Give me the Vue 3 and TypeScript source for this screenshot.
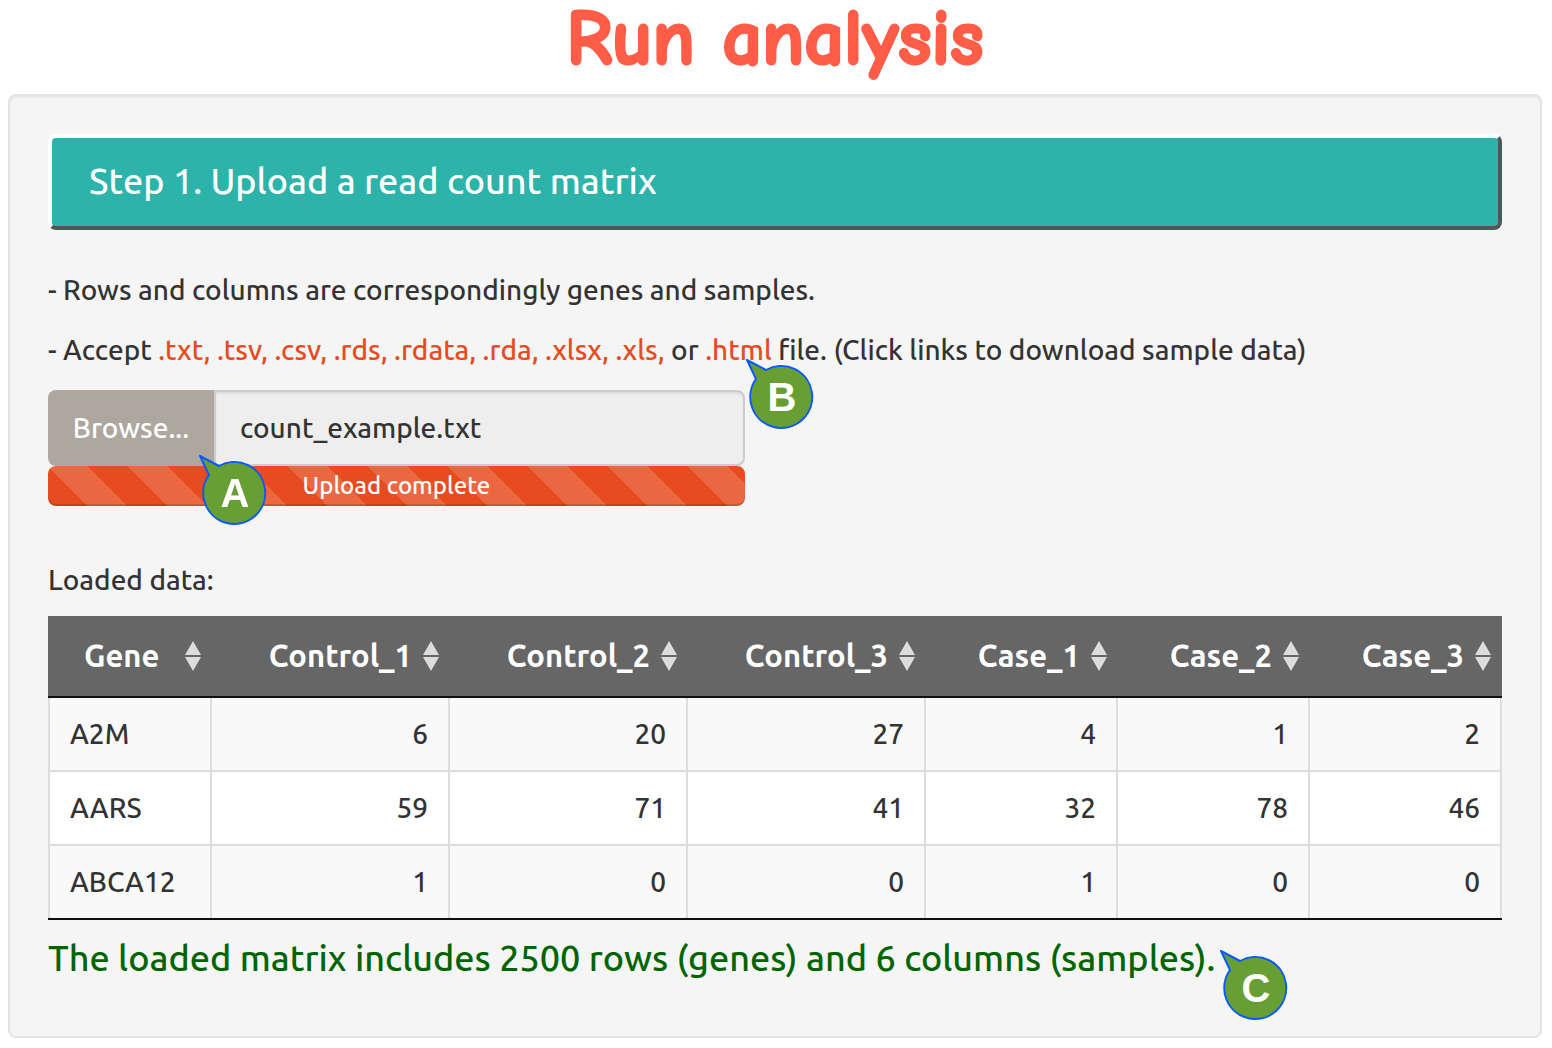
<script setup lang="ts">
import { ref } from 'vue'

interface Column {
  name: string
  width: number
}

interface GeneRow {
  gene: string
  counts: number[]
}

const formats: string[] = ['.txt,', '.tsv,', '.csv,', '.rds,', '.rdata,', '.rda,', '.xlsx,', '.xls,']

const columns: Column[] = [
  { name: 'Gene', width: 164 },
  { name: 'Control_1', width: 238 },
  { name: 'Control_2', width: 238 },
  { name: 'Control_3', width: 238 },
  { name: 'Case_1', width: 192 },
  { name: 'Case_2', width: 192 },
  { name: 'Case_3', width: 192 },
]

const rows: GeneRow[] = [
  { gene: 'A2M', counts: [6, 20, 27, 4, 1, 2] },
  { gene: 'AARS', counts: [59, 71, 41, 32, 78, 46] },
  { gene: 'ABCA12', counts: [1, 0, 0, 1, 0, 0] },
]

const fileName = ref('count_example.txt')

const calloutPath = 'M1 1 L20 11 A31 31 0 1 1 10 20 Z'

function onFile(event: Event) {
  const file = (event.target as HTMLInputElement).files?.[0]
  if (file) fileName.value = file.name
}
</script>

<template>
  <main class="page">
    <h1 class="page-title">Run analysis</h1>

    <section class="well">
      <h2 class="step">Step 1. Upload a read count matrix</h2>

      <p class="note">- Rows and columns are correspondingly genes and samples.</p>
      <p class="note">
        - Accept
        <template v-for="f in formats" :key="f"><a href="#">{{ f }}</a>{{ ' ' }}</template>or
        <a href="#">.html</a> file. (Click links to download sample data)
      </p>

      <div class="upload">
        <div class="file-row">
          <label class="browse">
            Browse...
            <input class="file-input" type="file" @change="onFile" />
          </label>
          <input class="file-name" type="text" aria-label="Selected file" readonly :value="fileName" />
        </div>
        <div class="progress" role="progressbar" aria-valuenow="100">Upload complete</div>
        <svg class="callout callout-a" viewBox="0 0 68 70">
          <path :d="calloutPath" />
          <text x="36" y="52">A</text>
        </svg>
        <svg class="callout callout-b" viewBox="0 0 68 70">
          <path :d="calloutPath" />
          <text x="36" y="52">B</text>
        </svg>
      </div>

      <p class="table-label">Loaded data:</p>
      <table class="data">
        <colgroup>
          <col v-for="c in columns" :key="c.name" :style="{ width: c.width + 'px' }" />
        </colgroup>
        <thead>
          <tr>
            <th v-for="c in columns" :key="c.name" scope="col">
              <button type="button" class="sort">
                <span>{{ c.name }}</span>
                <svg class="sort-icon" viewBox="0 0 18 32">
                  <path d="M9 1 L17 15 H1 Z M9 31 L17 17 H1 Z" />
                </svg>
              </button>
            </th>
          </tr>
        </thead>
        <tbody>
          <tr v-for="r in rows" :key="r.gene">
            <td>{{ r.gene }}</td>
            <td v-for="(n, i) in r.counts" :key="i" class="num">{{ n }}</td>
          </tr>
        </tbody>
      </table>

      <p class="status">
        <span class="status-text">The loaded matrix includes 2500 rows (genes) and 6 columns (samples).<svg class="callout callout-c" viewBox="0 0 68 70">
            <path :d="calloutPath" />
            <text x="36" y="52">C</text>
          </svg></span>
      </p>
    </section>
  </main>
</template>

<style>
body {
  margin: 0;
  background: #fff;
}
</style>

<style scoped>
.page {
  padding: 0 10px 10px 8px;
  font-family: Ubuntu, "Noto Sans", sans-serif;
  font-size: 28px;
  font-weight: 500;
  line-height: 40px;
  color: #333;
}

.page *,
.page {
  box-sizing: border-box;
}

.page-title {
  margin: 0;
  padding-bottom: 16px;
  line-height: 78px;
  font-family: "Comic Sans MS", "Comic Neue", "Comic Relief", cursive;
  font-size: 78px;
  font-weight: 700;
  text-align: center;
  color: #ff5d48;
  -webkit-text-stroke: 3px #ff5d48;
  paint-order: stroke fill;
}

.well {
  padding: 38px 38px 58px;
  border: 2px solid #e3e3e3;
  border-radius: 8px;
  background: #f5f5f5;
  box-shadow: inset 0 2px 2px rgba(0, 0, 0, 0.05);
}

.step {
  margin: 0 0 40px;
  padding: 23px 37px 25px;
  border: 4px solid;
  border-color: #fff #555 #555 #fff;
  border-radius: 8px;
  background: #2cb3aa;
  color: #fff;
  font-size: 36px;
  font-weight: 500;
  line-height: 40px;
}

.note {
  margin: 0 0 20px;
}

.note a {
  color: #e74c21;
  text-decoration: none;
}

.upload {
  position: relative;
  width: calc(50% - 30px);
  margin-bottom: 54px;
}

.file-row {
  display: flex;
  height: 76px;
}

.browse {
  flex: 0 0 166px;
  position: relative;
  overflow: hidden;
  border-radius: 8px 0 0 8px;
  background: #aea79f;
  color: #fff;
  line-height: 76px;
  text-align: center;
}

.file-input {
  position: absolute;
  inset: 0;
  opacity: 0;
}

.file-name {
  flex: 1;
  min-width: 0;
  padding: 0 24px;
  border: 2px solid #ccc;
  border-radius: 0 8px 8px 0;
  background: #eee;
  box-shadow: inset 0 2px 2px rgba(0, 0, 0, 0.075);
  color: #333;
  font: inherit;
  outline: none;
}

.progress {
  height: 40px;
  border-radius: 8px;
  background: linear-gradient(45deg, rgba(255, 255, 255, 0.15) 25%, transparent 25%, transparent 50%, rgba(255, 255, 255, 0.15) 50%, rgba(255, 255, 255, 0.15) 75%, transparent 75%) 0 0 / 80px 80px #e74c21;
  box-shadow: inset 0 -2px 0 rgba(0, 0, 0, 0.15);
  color: #fff;
  font-size: 24px;
  text-align: center;
}

.table-label {
  margin: 0 0 16px;
}

.data {
  width: 100%;
  table-layout: fixed;
  border-collapse: separate;
  border-spacing: 0;
  border-bottom: 2px solid #111;
}

.data th {
  padding: 0;
  border-bottom: 2px solid #111;
  background: #666;
}

.sort {
  display: flex;
  align-items: center;
  justify-content: flex-end;
  gap: 10px;
  width: 100%;
  height: 80px;
  padding: 0 10px;
  border: 0;
  background: none;
  color: #fff;
  font: inherit;
  font-size: 31px;
  font-weight: 700;
}

.data th:first-child .sort {
  justify-content: space-between;
  padding-left: 36px;
}

.sort-icon {
  flex: none;
  width: 18px;
  height: 32px;
  fill: #dcdcdc;
}

.data td {
  height: 74px;
  padding: 0 20px;
  border-right: 2px solid #ddd;
  border-bottom: 2px solid #ddd;
  background: #f9f9f9;
}

.data td:first-child {
  border-left: 2px solid #ddd;
}

.data tr:nth-child(even) td {
  background: #fff;
}

.data tr:last-child td {
  height: 72px;
  border-bottom: 0;
}

.num {
  text-align: right;
}

.status {
  margin: 18px 0 0;
  color: #006400;
  font-size: 36px;
}

.status-text {
  position: relative;
}

.callout {
  position: absolute;
  width: 68px;
  height: 70px;
}

.callout path {
  fill: #689f34;
  stroke: #0a58ff;
  stroke-width: 2px;
}

.callout text {
  fill: #fff;
  font: 700 40px "Liberation Sans", sans-serif;
  text-anchor: middle;
}

.callout-a {
  left: 151px;
  top: 65px;
}

.callout-b {
  left: 698px;
  top: -31px;
}

.callout-c {
  left: calc(100% + 5px);
  top: 13px;
}
</style>
